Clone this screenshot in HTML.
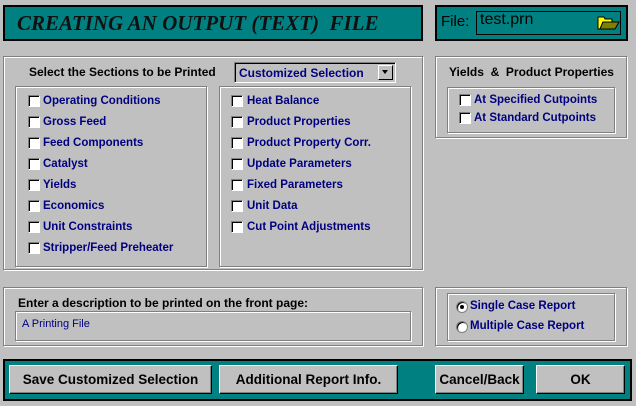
<!DOCTYPE html>
<html><head><style>
*{margin:0;padding:0;box-sizing:border-box}
body{width:636px;height:406px;background:#c0c0c0;position:relative;overflow:hidden;font-family:"Liberation Sans",Arial,sans-serif;font-size:11.5px;font-weight:bold}
.a{position:absolute}
.teal{background:#008080;border:2px solid #000}
.grp{border:1px solid #808080;box-shadow:inset 1px 1px 0 #fff,1px 1px 0 #fff}
.cb{position:absolute;width:12px;height:12px;background:#fff;border-top:1px solid #808080;border-left:1px solid #808080;border-right:1px solid #fff;border-bottom:1px solid #fff;box-shadow:inset 1px 1px 0 #000}
.lb{position:absolute;color:#000080;white-space:nowrap}
.bk{position:absolute;color:#000;font-size:12px;white-space:nowrap}
.btn{position:absolute;background:#c0c0c0;border:1px solid;border-color:#fff #000 #000 #fff;box-shadow:inset -1px -1px 0 #808080;font-size:13.5px;text-align:center;line-height:27px;color:#000}
.rd{position:absolute;width:12px;height:12px;border-radius:50%;background:#fff;border:1px solid #808080;box-shadow:inset 1px 1px 0 #000}
</style></head><body>
<div class="a teal" style="left:3px;top:5px;width:420px;height:36px"></div>
<div class="a" style="left:17px;top:11px;font-family:'Liberation Serif',serif;font-style:italic;font-size:21px;color:#101010">CREATING AN OUTPUT (TEXT)&nbsp; FILE</div>
<div class="a teal" style="left:435px;top:5px;width:193px;height:36px"></div>
<div class="a" style="left:441px;top:13px;font-size:15px;font-weight:normal;color:#000">File:</div>
<div class="a" style="left:476px;top:11px;width:145px;height:24px;border:1px solid #000"></div>
<div class="a" style="left:480px;top:11px;font-size:16px;font-weight:normal;color:#000">test.prn</div>
<svg class="a" style="left:597px;top:15px" width="24" height="16"><path d="M1 2h6l1 2h7v3H6L3 14H1z" fill="#ff0" stroke="#000"/><path d="M6 7h16l-4 7H3z" fill="#808000" stroke="#000"/></svg>

<div class="a grp" style="left:3px;top:56px;width:420px;height:214px"></div>
<div class="bk" style="left:29px;top:65px">Select the Sections to be Printed</div>
<div class="a" style="left:234px;top:62px;width:162px;height:21px;background:#c0c0c0;border:1px solid;border-color:#808080 #fff #fff #808080;box-shadow:inset 1px 1px 0 #000"></div>
<div class="lb" style="left:239px;top:66px;font-size:12px">Customized Selection</div>
<div class="a" style="left:378px;top:65px;width:15px;height:15px;background:#c0c0c0;border:1px solid;border-color:#fff #000 #000 #fff"></div>
<div class="a" style="left:382px;top:70px;border-left:3.5px solid transparent;border-right:3.5px solid transparent;border-top:4px solid #000"></div>
<div class="a grp" style="left:15px;top:86px;width:192px;height:181px"></div>
<div class="a grp" style="left:219px;top:86px;width:192px;height:181px"></div>

<div class="cb" style="left:28px;top:95px"></div><div class="lb" style="left:43px;top:95px">Operating Conditions</div>
<div class="cb" style="left:28px;top:116px"></div><div class="lb" style="left:43px;top:116px">Gross Feed</div>
<div class="cb" style="left:28px;top:137px"></div><div class="lb" style="left:43px;top:137px">Feed Components</div>
<div class="cb" style="left:28px;top:158px"></div><div class="lb" style="left:43px;top:158px">Catalyst</div>
<div class="cb" style="left:28px;top:179px"></div><div class="lb" style="left:43px;top:179px">Yields</div>
<div class="cb" style="left:28px;top:200px"></div><div class="lb" style="left:43px;top:200px">Economics</div>
<div class="cb" style="left:28px;top:221px"></div><div class="lb" style="left:43px;top:221px">Unit Constraints</div>
<div class="cb" style="left:28px;top:242px"></div><div class="lb" style="left:43px;top:242px">Stripper/Feed Preheater</div>

<div class="cb" style="left:231px;top:95px"></div><div class="lb" style="left:247px;top:95px">Heat Balance</div>
<div class="cb" style="left:231px;top:116px"></div><div class="lb" style="left:247px;top:116px">Product Properties</div>
<div class="cb" style="left:231px;top:137px"></div><div class="lb" style="left:247px;top:137px">Product Property Corr.</div>
<div class="cb" style="left:231px;top:158px"></div><div class="lb" style="left:247px;top:158px">Update Parameters</div>
<div class="cb" style="left:231px;top:179px"></div><div class="lb" style="left:247px;top:179px">Fixed Parameters</div>
<div class="cb" style="left:231px;top:200px"></div><div class="lb" style="left:247px;top:200px">Unit Data</div>
<div class="cb" style="left:231px;top:221px"></div><div class="lb" style="left:247px;top:221px">Cut Point Adjustments</div>

<div class="a grp" style="left:435px;top:56px;width:192px;height:82px"></div>
<div class="bk" style="left:449px;top:65px">Yields &nbsp;&amp;&nbsp; Product Properties</div>
<div class="a grp" style="left:447px;top:87px;width:168px;height:46px"></div>
<div class="cb" style="left:459px;top:94px"></div><div class="lb" style="left:474px;top:94px">At Specified Cutpoints</div>
<div class="cb" style="left:459px;top:112px"></div><div class="lb" style="left:474px;top:112px">At Standard Cutpoints</div>

<div class="a grp" style="left:3px;top:287px;width:420px;height:59px"></div>
<div class="bk" style="left:18px;top:296px">Enter a description to be printed on the front page:</div>
<div class="a grp" style="left:15px;top:311px;width:396px;height:30px"></div>
<div class="a" style="left:22px;top:318px;font-weight:normal;font-size:11px;color:#000080">A Printing File</div>

<div class="a grp" style="left:435px;top:287px;width:192px;height:59px"></div>
<div class="a grp" style="left:447px;top:293px;width:168px;height:48px"></div>
<div class="rd" style="left:456px;top:301px"></div><div class="a" style="left:460px;top:305px;width:4px;height:4px;background:#000;border-radius:50%"></div>
<div class="lb" style="left:470px;top:300px">Single Case Report</div>
<div class="rd" style="left:456px;top:321px"></div>
<div class="lb" style="left:470px;top:320px">Multiple Case Report</div>

<div class="a teal" style="left:3px;top:359px;width:629px;height:42px"></div>
<div class="btn" style="left:9px;top:365px;width:203px;height:29px">Save Customized Selection</div>
<div class="btn" style="left:219px;top:365px;width:179px;height:29px">Additional Report Info.</div>
<div class="btn" style="left:435px;top:365px;width:89px;height:29px">Cancel/Back</div>
<div class="btn" style="left:536px;top:365px;width:89px;height:29px">OK</div>
</body></html>
